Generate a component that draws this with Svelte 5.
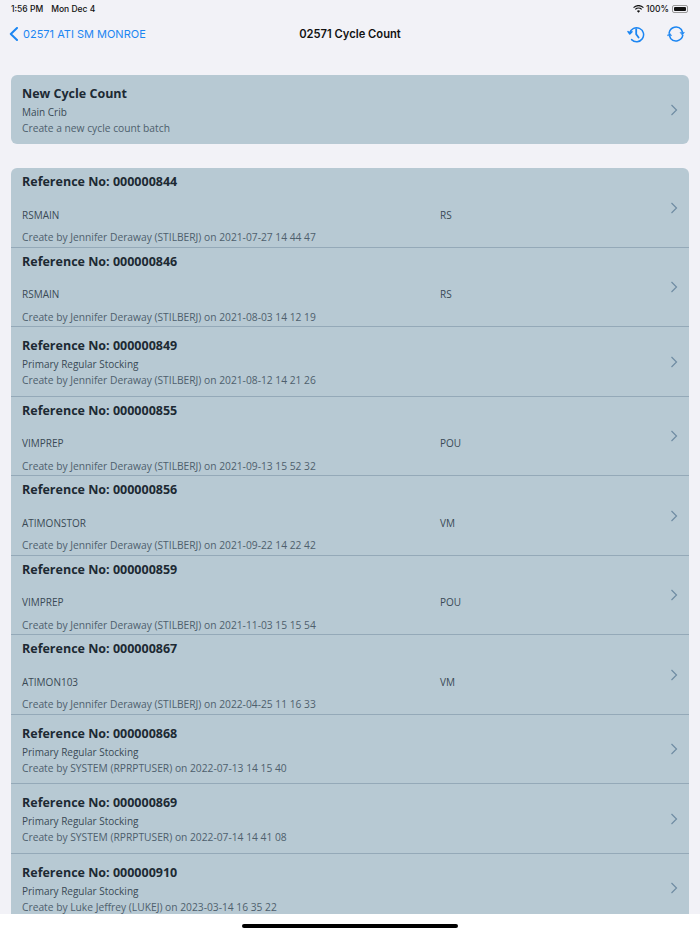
<script>
  let batches = [
    { ref: "000000844", name: "RSMAIN", code: "RS", by: "Jennifer Deraway (STILBERJ)", on: "2021-07-27 14 44 47" },
    { ref: "000000846", name: "RSMAIN", code: "RS", by: "Jennifer Deraway (STILBERJ)", on: "2021-08-03 14 12 19" },
    { ref: "000000849", desc: "Primary Regular Stocking", by: "Jennifer Deraway (STILBERJ)", on: "2021-08-12 14 21 26" },
    { ref: "000000855", name: "VIMPREP", code: "POU", by: "Jennifer Deraway (STILBERJ)", on: "2021-09-13 15 52 32" },
    { ref: "000000856", name: "ATIMONSTOR", code: "VM", by: "Jennifer Deraway (STILBERJ)", on: "2021-09-22 14 22 42" },
    { ref: "000000859", name: "VIMPREP", code: "POU", by: "Jennifer Deraway (STILBERJ)", on: "2021-11-03 15 15 54" },
    { ref: "000000867", name: "ATIMON103", code: "VM", by: "Jennifer Deraway (STILBERJ)", on: "2022-04-25 11 16 33" },
    { ref: "000000868", desc: "Primary Regular Stocking", by: "SYSTEM (RPRPTUSER)", on: "2022-07-13 14 15 40" },
    { ref: "000000869", desc: "Primary Regular Stocking", by: "SYSTEM (RPRPTUSER)", on: "2022-07-14 14 41 08" },
    { ref: "000000910", desc: "Primary Regular Stocking", by: "Luke Jeffrey (LUKEJ)", on: "2023-03-14 16 35 22" }
  ];
</script>

<div class="screen">
  <div class="status">
    <div class="status-left"><span>1:56 PM</span><span>Mon Dec 4</span></div>
    <div class="status-right">
      <svg class="wifi" width="11" height="8" viewBox="0 0 12 9"><path d="M6 8.6 4.2 6.7a2.6 2.6 0 0 1 3.6 0zM2.9 5.4 1.9 4.4a5.9 5.9 0 0 1 8.2 0l-1 1a4.4 4.4 0 0 0-6.2 0zM.9 3.4 0 2.4a8.6 8.6 0 0 1 12 0l-.9 1a7.3 7.3 0 0 0-10.2 0z" fill="#111"/></svg>
      <span>100%</span>
      <div class="battery"><div class="battery-fill"></div></div>
    </div>
  </div>

  <div class="nav">
    <div class="back">
      <svg width="10" height="14" viewBox="0 0 10 14"><path d="M8 1 1.8 7 8 13" fill="none" stroke="#1c86f2" stroke-width="2" stroke-linecap="round" stroke-linejoin="round"/></svg>
      <span>02571 ATI SM MONROE</span>
    </div>
    <div class="title">02571 Cycle Count</div>
    <div class="actions">
      <svg width="18" height="18" viewBox="0 0 18 18" fill="none" stroke="#1c86f2" stroke-width="1.5" stroke-linecap="round" stroke-linejoin="round">
        <path d="M2.8 8A7 7 0 1 1 4.6 14.6"/>
        <path d="M1 6.6 2.8 9 5 6.8" fill="#1c86f2"/>
        <path d="M9.2 4.2V9.2L11.6 12.6" stroke-width="1.8"/>
      </svg>
      <svg width="18" height="18" viewBox="0 0 18 18" fill="none" stroke="#1c86f2" stroke-width="1.5" stroke-linecap="round" stroke-linejoin="round">
        <path d="M2.2 7.6A7 7 0 0 1 14.4 4.6L15.4 7"/>
        <path d="M15.8 10.4A7 7 0 0 1 3.6 13.4L2.6 11"/>
        <path d="M13.4 7.4h4L15.4 10z" fill="#1c86f2" stroke-width=".6"/>
        <path d="M.6 10.6h4L2.6 8z" fill="#1c86f2" stroke-width=".6"/>
      </svg>
    </div>
  </div>

  <div class="content">
    <div class="card new-card">
      <div class="row-text">
        <div class="heading">New Cycle Count</div>
        <div class="line">Main Crib</div>
        <div class="sub">Create a new cycle count batch</div>
      </div>
      <svg class="chevron" width="8" height="12" viewBox="0 0 8 12"><path d="M1.5 1 6.5 6 1.5 11" fill="none" stroke="#6f8ca3" stroke-width="1.2"/></svg>
    </div>

    <div class="card list">
      {#each batches as b}
        <div class="row" class:tall={b.name}>
          <div class="row-text">
            <div class="heading">Reference No: {b.ref}</div>
            {#if b.name}
              <div class="line two-col"><span class="name">{b.name}</span><span>{b.code}</span></div>
            {:else}
              <div class="line">{b.desc}</div>
            {/if}
            <div class="sub">Create by {b.by} on {b.on}</div>
          </div>
          <svg class="chevron" width="8" height="12" viewBox="0 0 8 12"><path d="M1.5 1 6.5 6 1.5 11" fill="none" stroke="#6f8ca3" stroke-width="1.2"/></svg>
        </div>
      {/each}
    </div>
  </div>

  <div class="home-bar"><div class="indicator"></div></div>
</div>

<style>
  :global(body) {
    margin: 0;
    background: #f2f2f7;
  }

  .screen {
    width: 700px;
    height: 934px;
    display: flex;
    flex-direction: column;
    overflow: hidden;
    font-family: "Open Sans", "Noto Sans", sans-serif;
    color: #1d2a33;
  }

  .status {
    height: 17px;
    flex: none;
    display: flex;
    justify-content: space-between;
    align-items: center;
    padding: 0 12px 0 11px;
    font-family: Inter, sans-serif;
    font-size: 8.5px;
    font-weight: 500;
    color: #111;
  }

  .status-left {
    display: flex;
    gap: 8px;
  }

  .status-right {
    display: flex;
    align-items: center;
    gap: 3px;
  }

  .wifi {
    margin-right: -1px;
  }

  .battery {
    width: 16px;
    height: 8px;
    padding: 1px;
    border-radius: 2px;
    border: 1px solid #999;
    box-sizing: border-box;
  }

  .battery-fill {
    height: 100%;
    background: #111;
    border-radius: 1px;
  }

  .nav {
    height: 34px;
    flex: none;
    position: relative;
    display: flex;
    align-items: center;
    justify-content: space-between;
    padding: 0 15px 0 9px;
  }

  .back {
    display: flex;
    align-items: center;
    gap: 4px;
    color: #1c86f2;
    font-family: Inter, sans-serif;
    font-size: 11px;
  }

  .title {
    position: absolute;
    left: 0;
    right: 0;
    text-align: center;
    font-family: Inter, sans-serif;
    font-size: 11.2px;
    font-weight: 600;
    color: #111;
  }

  .actions {
    display: flex;
    gap: 22px;
  }

  .content {
    flex: 1;
    min-height: 0;
    overflow: hidden;
    padding: 24px 11px 0;
  }

  .card {
    background: #b7c9d3;
    border-radius: 6px;
  }

  .new-card {
    height: 69px;
    display: flex;
    align-items: center;
    justify-content: space-between;
    margin-bottom: 24px;
    padding: 0 11px;
  }

  .row {
    height: 69.5px;
    display: flex;
    align-items: center;
    justify-content: space-between;
    padding: 0 11px;
    border-bottom: 1px solid #94a9b8;
    box-sizing: border-box;
  }

  .row.tall {
    height: 79.5px;
  }

  .row-text {
    flex: 1;
    align-self: flex-start;
    padding-top: 10px;
  }

  .new-card .row-text {
    padding-top: 9.5px;
  }

  .tall .row-text {
    padding-top: 5px;
  }

  .heading {
    font-size: 12.5px;
    line-height: 17px;
    font-weight: 700;
    color: #1d2a33;
  }

  .line {
    margin-top: 3px;
    font-size: 10px;
    line-height: 14px;
    color: #3a4955;
  }

  .tall .line {
    margin-top: 17.5px;
  }

  .two-col {
    display: flex;
  }

  .name {
    width: 418px;
  }

  .sub {
    margin-top: 2px;
    font-size: 10.25px;
    line-height: 14px;
    color: #4e606d;
  }

  .tall .sub {
    margin-top: 8.5px;
  }

  .chevron {
    flex: none;
    margin-top: 1px;
  }

  .home-bar {
    height: 20px;
    flex: none;
    background: #fff;
    display: flex;
    justify-content: center;
    padding-top: 10px;
    box-sizing: border-box;
  }

  .indicator {
    width: 216px;
    height: 4px;
    border-radius: 2px;
    background: #000;
  }
</style>
